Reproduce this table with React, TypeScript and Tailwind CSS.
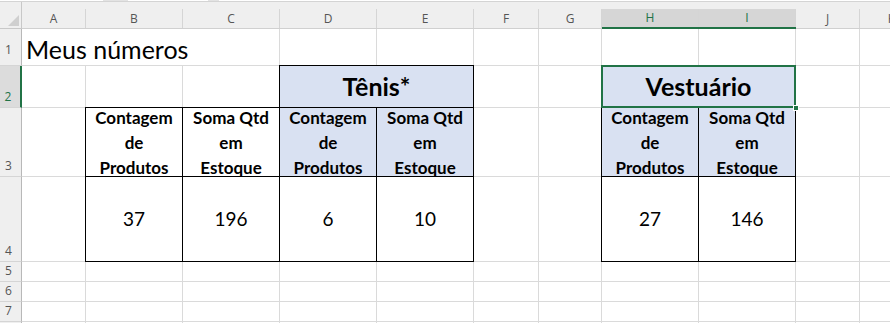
import React from "react";

const plain = "border-r border-b border-[#dadada]";

const ColHeader: React.FC<{ letter: string; selected?: boolean }> = ({ letter, selected }) => (
  <div
    className={`flex items-end bg-[#efefef] ${
      selected ? "border-b-2 border-[#217346]" : "border-b border-[#d0d0d0]"
    }`}
  >
    <div
      className={`w-full flex items-center justify-center border-r border-[#d5d5d5] text-[12px] font-['Open_Sans',sans-serif] ${
        selected ? "h-[18px] bg-[#d6d6d6] text-[#217346]" : "h-[19px] text-[#555]"
      }`}
    >
      {letter}
    </div>
  </div>
);

const RowHeader: React.FC<{ n?: number; selected?: boolean; pad?: string }> = ({ n, selected, pad = "pb-[2px]" }) => (
  <div
    className={`flex items-end justify-center pr-[4px] border-b border-[#d5d5d5] text-[12px] leading-[16px] font-['Open_Sans',sans-serif] ${pad} ${
      selected
        ? "bg-[#dcdcdc] text-[#217346] border-r-2 border-r-[#217346]"
        : "bg-[#efefef] text-[#555] border-r border-r-[#b8b8b8]"
    }`}
  >
    {n}
  </div>
);

const HeadCell: React.FC<{ lines: string[]; blue?: boolean }> = ({ lines, blue }) => (
  <div
    className={`-mt-px -ml-px border border-black overflow-hidden flex flex-col items-center justify-center text-[17px] font-bold leading-[25px] ${
      blue ? "bg-[#d9e1f2]" : "bg-white"
    }`}
  >
    {lines.map((l) => (
      <span key={l} className="shrink-0 whitespace-nowrap">
        {l}
      </span>
    ))}
  </div>
);

const ValueCell: React.FC<{ value: number }> = ({ value }) => (
  <div className="-mt-px -ml-px border border-black bg-white flex items-center justify-center text-[19px]">
    {value}
  </div>
);

const Blank: React.FC<{ count: number }> = ({ count }) => (
  <>
    {Array.from({ length: count }).map((_, i) => (
      <div key={i} className={plain} />
    ))}
  </>
);

const letters = ["A", "B", "C", "D", "E", "F", "G", "H", "I", "J", "K"];

export default function App() {
  return (
    <div className="w-[890px] h-[323px] overflow-hidden bg-white text-black font-['Lato',sans-serif]">
      {/* formula bar edge */}
      <div className="h-[2px] flex gap-[1px] bg-[#e3e3e3] border-b border-[#d4d4d4]">
        <div className="w-[103px] bg-white" />
        <div className="w-[80px] ml-[24px] bg-white" />
        <div className="flex-1 ml-[10px] bg-white" />
      </div>

      <div className="w-max grid grid-cols-[22px_64px_97px_97px_97px_97px_65px_63px_97px_97px_64px_64px] grid-rows-[27px_37px_42px_69px_85px_20px_20px_20px_20px]">
        {/* column headers */}
        <div className="relative bg-[#efefef] border-r border-b border-[#c8c8c8]">
          <svg className="absolute right-[1px] bottom-[1px]" width="13" height="13" viewBox="0 0 13 13">
            <polygon points="12,1 12,12 1,12" fill="#cfcfcf" />
          </svg>
        </div>
        {letters.map((l) => (
          <ColHeader key={l} letter={l} selected={l === "H" || l === "I"} />
        ))}

        {/* row 1 */}
        <RowHeader n={1} pad="pb-[7px]" />
        <div className="border-b border-[#dadada] flex items-end pl-[4px] pb-[1px] whitespace-nowrap text-[25px] leading-[30px]">
          Meus números
        </div>
        <div className="border-b border-[#dadada]" />
        <Blank count={9} />

        {/* row 2 */}
        <RowHeader n={2} selected />
        <Blank count={3} />
        <div className="col-span-2 -mt-px -ml-px border border-black bg-[#d9e1f2] flex items-center justify-center text-[25px] font-bold">
          Tênis*
        </div>
        <Blank count={2} />
        <div className="relative col-span-2 -mt-px -ml-px border border-black bg-[#d9e1f2] flex items-center justify-center text-[25px] font-bold">
          Vestuário
          <div className="absolute -left-px -top-px -right-px -bottom-px border-2 border-[#217346]" />
          <div className="absolute -right-[4px] -bottom-[4px] w-[6px] h-[6px] bg-[#217346] border border-white" />
        </div>
        <Blank count={2} />

        {/* row 3 */}
        <RowHeader n={3} />
        <Blank count={1} />
        <HeadCell lines={["Contagem", "de", "Produtos"]} />
        <HeadCell lines={["Soma Qtd", "em", "Estoque"]} />
        <HeadCell lines={["Contagem", "de", "Produtos"]} blue />
        <HeadCell lines={["Soma Qtd", "em", "Estoque"]} blue />
        <Blank count={2} />
        <HeadCell lines={["Contagem", "de", "Produtos"]} blue />
        <HeadCell lines={["Soma Qtd", "em", "Estoque"]} blue />
        <Blank count={2} />

        {/* row 4 */}
        <RowHeader n={4} />
        <Blank count={1} />
        <ValueCell value={37} />
        <ValueCell value={196} />
        <ValueCell value={6} />
        <ValueCell value={10} />
        <Blank count={2} />
        <ValueCell value={27} />
        <ValueCell value={146} />
        <Blank count={2} />

        {/* rows 5-8 */}
        <RowHeader n={5} />
        <Blank count={11} />
        <RowHeader n={6} />
        <Blank count={11} />
        <RowHeader n={7} />
        <Blank count={11} />
        <RowHeader />
        <Blank count={11} />
      </div>
    </div>
  );
}
